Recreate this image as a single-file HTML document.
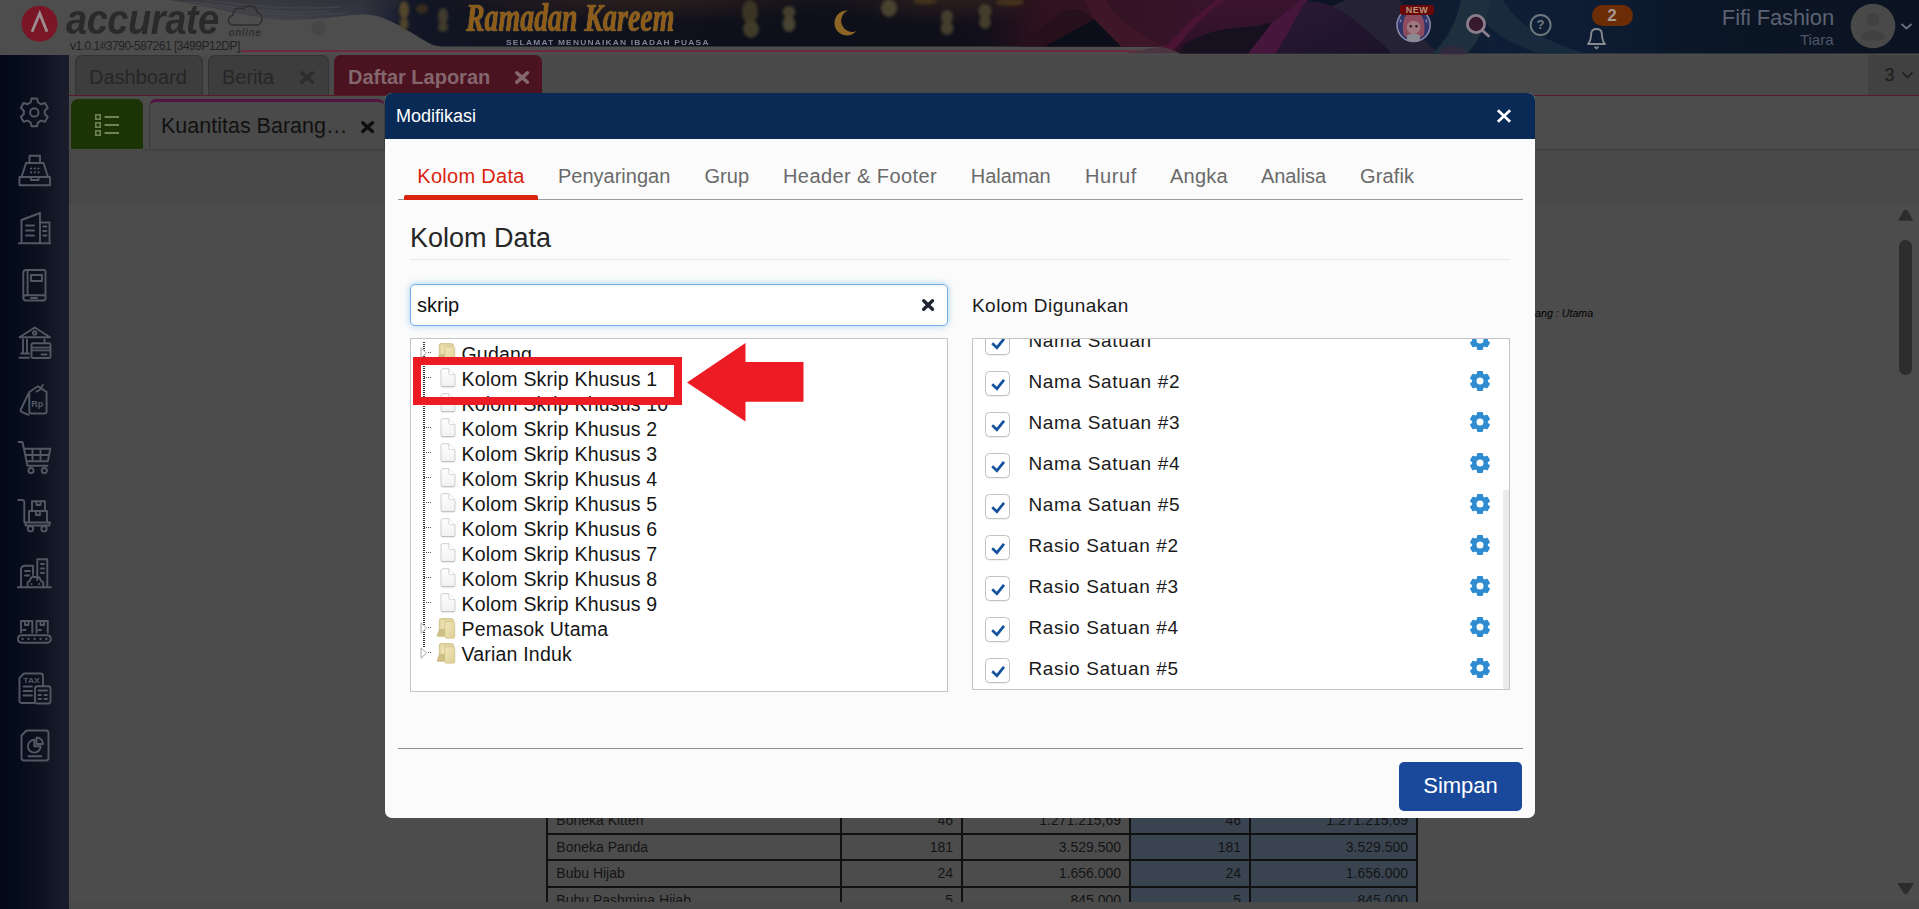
<!DOCTYPE html>
<html lang="id">
<head>
<meta charset="utf-8">
<title>Accurate Online - Modifikasi</title>
<style>
*{box-sizing:border-box;margin:0;padding:0}
html,body{width:1919px;height:909px;overflow:hidden}
body{background:#4c4c4c;font-family:"Liberation Sans",sans-serif;position:relative;color:#222}
.abs{position:absolute}
/* ---------- header ---------- */
#hdr{position:absolute;left:0;top:0;width:1919px;height:55px;overflow:hidden;background:#4e4e4e}
#hdr svg{position:absolute;left:0;top:0}
.logo-text{position:absolute;left:66px;top:-4px;font:italic bold 42px/48px "Liberation Sans",sans-serif;color:#2a2a2a;letter-spacing:-0.5px;transform:scaleX(.905);transform-origin:left}
.logo-online{position:absolute;left:228.500px;top:27px;font:italic bold 10px/11px "Liberation Sans",sans-serif;color:#303030;letter-spacing:.55px}
.ver{position:absolute;left:70px;top:39.500px;font:12px/13px "Liberation Sans",sans-serif;color:#222;letter-spacing:-0.5px}
.rk{position:absolute;left:466px;top:-7px;font:italic bold 41px/48px "Liberation Serif",serif;color:#8d5c18;letter-spacing:0;white-space:nowrap;transform:scaleX(.68);transform-origin:left;text-shadow:0 0 1.5px #8a7648,0 0 1px #8a7648}
.rk2{position:absolute;left:506px;top:37.500px;font:bold 7px/9px "Liberation Sans",sans-serif;color:#7f8494;letter-spacing:1px;white-space:nowrap;transform:scaleX(1.2);transform-origin:left}
.uname{position:absolute;right:85px;top:5px;font:22px/25px "Liberation Sans",sans-serif;color:#5c6272;white-space:nowrap;letter-spacing:-0.13px}
.urole{position:absolute;right:85.500px;top:30.500px;font:15px/18px "Liberation Sans",sans-serif;color:#50566a;white-space:nowrap}
.qm{position:absolute;left:1535px;top:16px;width:11px;font:bold 13px/17px "Liberation Sans",sans-serif;color:#737d82;text-align:center}
.badge{position:absolute;left:1591.500px;top:5px;width:41px;height:21px;border-radius:11px;background:#6c2c05;color:#a69791;font:bold 17px/21.500px "Liberation Sans",sans-serif;text-align:center}
.new{position:absolute;left:1400px;top:5.300px;width:34px;height:10px;border-radius:3px;background:#6a0808;color:#b89880;font:bold 9px/10.500px "Liberation Sans",sans-serif;text-align:center;letter-spacing:.5px}
/* ---------- sidebar ---------- */
#side{position:absolute;left:0;top:55px;width:69px;height:854px;background:linear-gradient(90deg,#030916 0%,#050c1b 25%,#0c111f 55%,#151827 80%,#1b1d2b 100%)}
#side svg{position:absolute;fill:none;stroke:#535762;stroke-width:1.9;stroke-linecap:round;stroke-linejoin:round}
/* ---------- top tabs ---------- */
.tab{position:absolute;top:55px;height:40px;border:1px solid #333;border-bottom:none;border-radius:7px 7px 0 0;background:#3d3d3d;color:#262626;font:20px/42px "Liberation Sans",sans-serif;white-space:nowrap}
.tab span{position:absolute;top:0}
.tab .x{font:bold 20px/42px "Liberation Sans",sans-serif}
#t3{background:#4b1220;border-color:#4b1220;color:#83676d;font-weight:bold}
#tabline{position:absolute;left:69px;top:95px;width:1850px;height:1.200px;background:#5c1a26}
#cnt{position:absolute;left:1868px;top:55px;width:51px;height:40px;background:#414141;color:#1c1c1c;font:18px/40px "Liberation Sans",sans-serif}
#strip{position:absolute;left:69px;top:55px;width:1850px;height:40px;background:#494949}
#tool{position:absolute;left:69px;top:150px;width:1850px;height:54px;background:#484848}
/* ---------- second row ---------- */
#green{position:absolute;left:71px;top:99px;width:72px;height:50px;background:#1c3306;border-radius:7px 7px 0 0}
#kt{position:absolute;left:149px;top:99px;width:236px;height:50px;border:1px solid #3c3c3c;border-top:3px solid #541443;border-bottom:none;border-radius:7px 7px 0 0;background:#4a4a4a;color:#111;font:21.500px/48px "Liberation Sans",sans-serif}
#row2line{position:absolute;left:143px;top:149px;width:1776px;height:1px;background:#3d3d3d}
/* ---------- modal ---------- */
#modal{position:absolute;left:385px;top:93px;width:1150px;height:725px;background:#fbfbfb;border-radius:7px;overflow:hidden}
#mhead{position:absolute;left:0;top:0;width:1150px;height:45.500px;background:#0a2a56;color:#fff;font:18px/46px "Liberation Sans",sans-serif}
.mt{position:absolute;top:69px;letter-spacing:.12px;font:20px/28px "Liberation Sans",sans-serif;color:#6a6a6a;white-space:nowrap}
.mt.on{color:#d9230f}

/* ---------- report bg ---------- */
.gud{position:absolute;left:1535px;top:307px;font:italic 10.700px/13px "Liberation Sans",sans-serif;color:#020202;white-space:nowrap}
#tblwrap{position:absolute;left:546px;top:806px;width:872px;height:95.500px;overflow:hidden}
#tbl{border-collapse:collapse;table-layout:fixed;width:871px;font:14px/16px "Liberation Sans",sans-serif;color:#141414}
#tbl td{border:2px solid #111;height:26.500px;padding:0 8px 0 8.300px;white-space:nowrap;background:#4c4c4d;vertical-align:middle}
#tbl td.bl{background:#3a4450}
#tbl .c1{width:294px;text-align:left}
#tbl .c2{width:121px;text-align:right}
#tbl .c3{width:168px;text-align:right}
#tbl .c4{width:120px;text-align:right}
#tbl .c5{width:167px;text-align:right}
#sb-th{position:absolute;left:1898.800px;top:239.500px;width:13.200px;height:135px;border-radius:6.600px;background:#2d2d2d}
#botbar{position:absolute;left:69px;top:901.500px;width:1850px;height:8px;background:#4a4a4a}

#mtline{position:absolute;left:13px;top:105.500px;width:1125px;height:1.300px;background:#9a9a9a}
#mton{position:absolute;left:19px;top:102px;width:133.500px;height:4.500px;background:#d9230f;border-radius:2px 2px 0 0}
#h3{position:absolute;left:25px;top:125.800px;font:27px/38px "Liberation Sans",sans-serif;color:#262626;white-space:nowrap}
#hr1{position:absolute;left:25px;top:166px;width:1100px;height:1px;background:#e9e9e9}
#inp{position:absolute;left:25px;top:191px;width:538px;height:42px;border:1.500px solid #6fb0e6;border-radius:5px;background:#fff;box-shadow:0 0 7px rgba(102,175,233,.55), inset 0 1px 1px rgba(0,0,0,.06)}
#inptxt{position:absolute;left:6px;top:.6px;font:20px/39px "Liberation Sans",sans-serif;color:#111}
#inpx{position:absolute;left:510px;top:0;font:bold 15px/40px "Liberation Sans",sans-serif;color:#111}
#tree{position:absolute;left:25px;top:245px;width:538px;height:354px;border:1px solid #c4c4c4;background:#fff;overflow:hidden}
#vdots{position:absolute;left:12px;top:3px;width:1.500px;height:306px;background:repeating-linear-gradient(180deg,#333 0 1px,transparent 1px 2px)}
.ti{position:absolute;left:0;height:25px;width:520px;font:19.500px/25px "Liberation Sans",sans-serif;letter-spacing:.2px;color:#151515;white-space:nowrap}
.ti span{position:absolute;left:50.500px;top:0}
.ti .hd{position:absolute;left:13px;top:10px;width:8px;height:1.300px;background:repeating-linear-gradient(90deg,#555 0 1px,transparent 1px 2px)}
.ti .hd.f{left:17px;width:4px}
.ti .tri{position:absolute;left:9px;top:4.500px}
.ti .doc{position:absolute;left:28.500px;top:1px}
.ti .fold{position:absolute;left:25.300px;top:1px}
#redbox{position:absolute;left:28px;top:264px;width:269px;height:48px;border:8px solid #ed1c24}
#arrow{position:absolute;left:302px;top:250px}
#kd{position:absolute;left:587px;top:199.500px;font:19px/26px "Liberation Sans",sans-serif;letter-spacing:.45px;color:#1a1a1a;white-space:nowrap}
#list{position:absolute;left:587px;top:245px;width:538px;height:352px;border:1px solid #c4c4c4;background:#fff;overflow:hidden}
.li{position:absolute;left:0;width:536px;height:41px;font:19px/24px "Liberation Sans",sans-serif;letter-spacing:.65px;color:#1a1a1a;white-space:nowrap}
.li .cb{position:absolute;left:12px;top:0;width:25px;height:25px;border:1px solid #c2c2c2;border-radius:4.500px;background:#fff;box-shadow:0 1px 1px rgba(0,0,0,.06)}
.li .cb svg{position:absolute;left:-.5px;top:-.5px}
.li span{position:absolute;left:55.500px;top:-1.200px}
.li .gr{position:absolute;left:497.300px;top:0}
#lsb{position:absolute;left:530px;top:151px;width:7px;height:200px;background:#ebebeb}
#fline{position:absolute;left:13px;top:654.700px;width:1125px;height:1.300px;background:#8f8f8f}
#btn{position:absolute;left:1014px;top:669px;width:123px;height:49px;border-radius:5px;background:#1a499c;color:#fff;font:22px/47.600px "Liberation Sans",sans-serif;text-align:center}
</style>
</head>
<body>
<svg width="0" height="0" style="position:absolute">
<defs>
<linearGradient id="gdoc" x1="0" x2="0" y1="0" y2="1"><stop offset="0" stop-color="#ffffff"/><stop offset="1" stop-color="#f1f1f1"/></linearGradient>
<linearGradient id="gfold" x1="0" x2="1" y1="0" y2="1"><stop offset="0" stop-color="#f3e9bd"/><stop offset="1" stop-color="#dccd92"/></linearGradient>
<symbol id="sdoc" viewBox="0 0 16 20"><path d="M1 2.500 Q1 .700 2.800 .700 H8.800 L15 6.600 V17 Q15 18.800 13.200 18.800 H2.800 Q1 18.800 1 17Z" fill="url(#gdoc)" stroke="#cdcdcd" stroke-width="1"/><path d="M1.500 18.600 H14.500" stroke="#bfbfbf" stroke-width="1"/><path d="M8.800 .700 V5 Q8.800 6.600 10.400 6.600 H15" fill="#fff" stroke="#d2d2d2" stroke-width=".9"/></symbol>
<symbol id="sfold" viewBox="0 0 20 21"><path d="M3.300 2 Q3.300 .600 4.700 .600 H15.500 Q17.600 .600 17.600 2.700 V17.500 H3.300 Z" fill="#e2d5a0" stroke="#cbbd84" stroke-width=".8"/><path d="M5.300 2.500 H8 V16 H5.300Z" fill="#ece1b2"/><path d="M3.300 11 L.800 17 Q.400 18.800 2 18.800 H9.500 V11Z" fill="#cdbf86"/><path d="M8.800 5 Q8.800 3.800 10 3.800 H17.200 Q18.800 3.800 18.800 5.400 V18.600 Q18.800 20.200 17.200 20.200 H10.400 Q8.800 20.200 8.800 18.600Z" fill="url(#gfold)" stroke="#cfc088" stroke-width=".7"/></symbol>
<symbol id="stri" viewBox="0 0 8 12"><path d="M1 .800 L6.500 6 L1 11.200 Z" fill="#fff" stroke="#a8a8a8" stroke-width="1"/></symbol>
</defs></svg>
<div id="hdr">
<svg width="1919" height="55" viewBox="0 0 1919 55">
<defs>
<linearGradient id="gnav" x1="0" x2="1" y1="0" y2="0">
<stop offset="0" stop-color="#1a1e30"/><stop offset=".03" stop-color="#121624"/><stop offset=".146" stop-color="#0e101c"/><stop offset=".34" stop-color="#0d0f19"/><stop offset=".405" stop-color="#120f1a"/><stop offset=".47" stop-color="#15101d"/><stop offset=".664" stop-color="#101a2e"/><stop offset=".729" stop-color="#0f1e36"/><stop offset=".793" stop-color="#0e1c33"/><stop offset=".858" stop-color="#0b1626"/><stop offset="1" stop-color="#0a1320"/>
</linearGradient>
<linearGradient id="gtop" x1="0" x2="0" y1="0" y2="1"><stop offset="0" stop-color="#4a2a1c" stop-opacity=".75"/><stop offset=".55" stop-color="#2a1a24" stop-opacity=".25"/><stop offset="1" stop-color="#14162a" stop-opacity="0"/></linearGradient>
<linearGradient id="gw1" x1="0" x2="1" y1="0" y2="1"><stop offset="0" stop-color="#5a1428"/><stop offset="1" stop-color="#2a0f22"/></linearGradient>
<linearGradient id="gw2" x1="0" x2="1" y1="0" y2="1"><stop offset="0" stop-color="#4d1738"/><stop offset="1" stop-color="#22142e"/></linearGradient>
<linearGradient id="gw3" x1="0" x2="1" y1="0" y2="1"><stop offset="0" stop-color="#33204a"/><stop offset="1" stop-color="#191a33"/></linearGradient>
<radialGradient id="glan"><stop offset="0" stop-color="#8b7a45"/><stop offset=".6" stop-color="#6a5a30" stop-opacity=".8"/><stop offset="1" stop-color="#4a3a20" stop-opacity="0"/></radialGradient>
<filter id="bl"><feGaussianBlur stdDeviation="1.7"/></filter>
</defs>
<rect width="1919" height="55" fill="#4d4d4d"/>
<!-- navy banner -->
<path d="M375 0 L386 19.300 C400 24.500 417 37 432 44.700 C437 46.300 442 46.500 452 46.500 L1172 46.500 L1180 53.500 L1919 53.500 L1919 0 Z" fill="url(#gnav)"/>
<ellipse cx="640" cy="-4" rx="230" ry="30" fill="url(#gwarm)"/>
<ellipse cx="960" cy="-6" rx="170" ry="34" fill="url(#gwarm)"/>
<!-- light wave band top-left -->
<linearGradient id="gband" gradientUnits="userSpaceOnUse" x1="170" x2="415" y1="0" y2="0"><stop offset="0" stop-color="#4c4c4c"/><stop offset=".4" stop-color="#434449"/><stop offset=".78" stop-color="#343642"/><stop offset=".9" stop-color="#1f2334"/><stop offset="1" stop-color="#121624"/></linearGradient>
<linearGradient id="gbandv" x1="0" x2="0" y1="0" y2="1"><stop offset="0" stop-color="#2c2d34" stop-opacity=".55"/><stop offset="1" stop-color="#2c2d34" stop-opacity="0"/></linearGradient>
<radialGradient id="gwarm"><stop offset="0" stop-color="#32241f" stop-opacity=".95"/><stop offset=".6" stop-color="#281c1c" stop-opacity=".5"/><stop offset="1" stop-color="#1c141a" stop-opacity="0"/></radialGradient>
<path d="M168 0 C210 5 250 19 285 20 C310 20.500 335 16.500 363 14.300 C372 14.300 380 16.500 388 20 C395 22 405 24 415 24 L415 0 Z" fill="url(#gband)"/>
<path d="M168 0 C210 5 250 19 285 20 C310 20.500 335 16.500 363 14.300 C372 14.300 380 16.500 388 20 L400 0 Z" fill="url(#gbandv)"/>
<path d="M185 1 C240 8 280 15 330 11 M205 0 C250 6 290 10 340 7 M200 4 C250 13 290 18 345 13" stroke="#4a4b52" stroke-width=".7" fill="none"/>
<!-- pink line -->
<rect x="241" y="50.4" width="937" height="1.8" fill="#73203a"/>
<rect x="241" y="52.2" width="937" height="1" fill="#575055"/>
<!-- waves -->
<linearGradient id="gp1" gradientUnits="userSpaceOnUse" x1="985" x2="1200" y1="0" y2="0"><stop offset="0" stop-color="#2c111c" stop-opacity="0"/><stop offset=".28" stop-color="#30121e"/><stop offset="1" stop-color="#38142a"/></linearGradient>
<linearGradient id="gp4" x1="0" x2="0" y1="0" y2="1"><stop offset="0" stop-color="#3c1430"/><stop offset="1" stop-color="#2a1026"/></linearGradient>
<linearGradient id="gp5" x1="0" x2="1" y1="0" y2="1"><stop offset="0" stop-color="#2c1836"/><stop offset="1" stop-color="#1a1428"/></linearGradient>
<path d="M985 0 H1240 C1215 14 1195 32 1183 46.500 H985 Z" fill="url(#gp1)"/>
<path d="M1020 46.500 C1040 30 1055 12 1072 9 C1082 9 1088 14 1094 19.300 L1045 46.500 Z" fill="#26101a"/>
<path d="M1094 19.300 L1121 46.500 H1165 C1150 40 1125 25 1112 10 L1107 0 H1085 C1088 8 1090 14 1094 19.300 Z" fill="#3e1626"/>
<path d="M1045 46.500 L1094 19.300 L1121 46.500 Z" fill="#0b0d18"/>
<path d="M1125 53.500 C1140 50 1150 48 1165 46.500 L1172 46.500 L1180 53.500Z" fill="#4a3640"/>
<path d="M1165 46.500 C1178 36 1192 18 1216 0 H1300 C1290 8 1282 16 1272 22 C1262 26 1250 27 1236 28 C1215 30 1198 36 1186 44 L1180 53.500 Z" fill="url(#gp4)"/>
<path d="M1163 47.500 C1178 36 1192 18 1216 0 H1224 C1200 18 1186 36 1174 50 Z" fill="#4b1434"/>
<path d="M1183 46 C1198 36 1215 30 1236 28 C1250 27 1262 26 1272 22 C1266 32 1258 40 1248 53.500 H1180 Z" fill="#16101f"/>
<path d="M1248 53.500 C1258 40 1266 32 1272 22 C1282 16 1290 8 1300 0 H1308 C1300 14 1290 30 1276 53.500 Z" fill="#46163c"/>
<path d="M1276 53.500 C1290 30 1298 14 1304 3 C1312 1 1322 2 1332 6 C1352 16 1372 34 1392 53.500 Z" fill="url(#gp5)"/>
<path d="M1332 6 C1352 16 1372 34 1392 53.500 H1440 C1420 40 1410 20 1400 0 H1345 C1340 2 1336 4 1332 6Z" fill="#262236"/>
<path d="M1308 0 H1345 C1340 2 1336 4 1332 6 C1322 2 1314 1 1308 0Z" fill="#0c1424"/>
<path d="M1472 0 C1480 22 1500 42 1540 53.500 L1588 53.500 C1548 44 1516 24 1503 0 Z" fill="#1a2c3e" opacity=".9"/>
<path d="M1432 53.500 C1448 40 1457 20 1461 0 L1491 0 C1487 22 1479 42 1467 53.500 Z" fill="#1e303e"/>
<ellipse cx="1453" cy="52" rx="13" ry="6" fill="#4a2240" opacity=".45" filter="url(#bl)"/>
<!-- lanterns -->
<g filter="url(#bl)" opacity=".9">
<ellipse cx="404" cy="10" rx="5" ry="9" fill="#5a4c2c"/><ellipse cx="404" cy="24" rx="4.500" ry="6" fill="#54482a"/>
<ellipse cx="443" cy="16" rx="5" ry="8" fill="#46412f"/><ellipse cx="443" cy="27" rx="5" ry="5" fill="#46412f"/>
<ellipse cx="750" cy="12" rx="8" ry="12" fill="#3e3826"/><ellipse cx="751" cy="29" rx="8" ry="9" fill="#45402a"/>
<ellipse cx="789" cy="12" rx="6.500" ry="6" fill="#4a4530"/><ellipse cx="789" cy="24" rx="6.500" ry="8" fill="#4e4834"/>
<ellipse cx="889" cy="8" rx="8" ry="9" fill="#4e4630"/>
<ellipse cx="947" cy="17" rx="6" ry="7" fill="#48422e"/><ellipse cx="947" cy="28" rx="6.500" ry="7" fill="#48422e"/>
<ellipse cx="985" cy="11" rx="6.500" ry="7" fill="#48422e"/><ellipse cx="985" cy="22" rx="6" ry="7" fill="#48422e"/>
<ellipse cx="1010" cy="2" rx="14" ry="4" fill="#46361e"/>
<ellipse cx="925" cy="1" rx="12" ry="3.500" fill="#46361e"/>
<ellipse cx="422" cy="9" rx="6" ry="5" fill="#3a2e1a"/>
</g>
<!-- crescent -->
<path d="M848 10.500 A12.500 12.500 0 1 0 856.500 31 A10.800 10.800 0 1 1 848 10.500 Z" fill="#8c6424"/>
<!-- small gray dot -->
<circle cx="318.500" cy="28" r="7" fill="#464646"/>
<!-- logo -->
<circle cx="39.500" cy="23.700" r="18" fill="#7a1626"/>
<path d="M32 31.800 L39.700 13.500 L47 31.800" stroke="#9c8e90" stroke-width="2.800" fill="none" stroke-linejoin="miter"/>
<!-- cloud -->
<path d="M234 25 C227.500 25 226.500 17 233 15.500 C232.500 9.500 239 6 243.500 9.500 C247 3.500 257 5 257 12.500 C263.500 13 263.500 25 256.500 25 Z" stroke="#2e2e2e" stroke-width="1.500" fill="none"/>
<!-- avatar mascot -->
<g transform="translate(0 -2.700)">
<circle cx="1413.600" cy="27.700" r="16.600" fill="#2f346a" stroke="#8c8cac" stroke-width="1.500"/>
<path d="M1403.500 37 C1401 22 1406 14.500 1413.600 14.500 C1421 14.500 1426.500 22 1424 37 C1421 43 1406.500 43 1403.500 37Z" fill="#8e4c60"/>
<ellipse cx="1413.600" cy="30" rx="6.800" ry="6.500" fill="#a07880"/>
<path d="M1407 38 Q1413.600 34.500 1420 38 L1420 43 Q1413.600 45.500 1407 43Z" fill="#8a8a92"/>
<circle cx="1410.800" cy="29" r="1.200" fill="#2a1a22"/><circle cx="1416.400" cy="29" r="1.200" fill="#2a1a22"/>
<path d="M1399.500 22 l2 1.500 l-2 1.500 M1427.500 22 l-2 1.500 l2 1.500" stroke="#9a9ab8" stroke-width="1" fill="none"/>
</g>
<!-- search -->
<circle cx="1476" cy="24" r="8.600" stroke="#8c7f8e" stroke-width="2.800" fill="#37192d"/>
<path d="M1482.500 30.500 L1488.500 36" stroke="#8c7f8e" stroke-width="2.800" stroke-linecap="round"/>
<!-- help -->
<circle cx="1540.600" cy="25" r="10" stroke="#6f797e" stroke-width="1.900" fill="none"/>
<!-- bell -->
<path d="M1588 44 C1591.300 41 1590.800 36 1591.300 33 C1592 27.600 1601 27.600 1601.700 33 C1602.200 36 1601.700 41 1605 44 Z" stroke="#868a90" stroke-width="1.900" fill="none" stroke-linejoin="round"/>
<path d="M1594.500 46.500 L1596.500 48.500 L1598.500 46.500" stroke="#868a90" stroke-width="1.600" fill="none"/>
<!-- user avatar -->
<circle cx="1873" cy="26" r="22.300" fill="#494949"/>
<circle cx="1873" cy="19.500" r="6.500" fill="#414141"/>
<path d="M1861.500 38 C1861.500 28 1884.500 28 1884.500 38 C1884.500 42 1861.500 42 1861.500 38Z" fill="#414141"/>
<path d="M1901.500 24 L1906.500 28.500 L1911.500 24" stroke="#6a7380" stroke-width="1.700" fill="none"/>
</svg>
<div class="logo-text">accurate</div>
<div class="logo-online">online</div>
<div class="ver">v1.0.1#3790-587261 [3499P12DP]</div>
<div class="rk">Ramadan Kareem</div>
<div class="rk2">SELAMAT MENUNAIKAN IBADAH PUASA</div>
<div class="new">NEW</div>
<div class="qm">?</div>
<div class="badge">2</div>
<div class="uname">Fifi Fashion</div>
<div class="urole">Tiara</div>
</div>
<div id="side">
<svg style="left:0;top:0;width:69px;height:854px" viewBox="0 55 69 854">
<!-- gear -->
<path d="M30.50 102.50 L31.59 98.46 L37.01 98.46 L38.10 102.50 L40.97 104.16 L45.02 103.08 L47.73 107.78 L44.77 110.74 L44.77 114.06 L47.73 117.02 L45.02 121.72 L40.97 120.64 L38.10 122.30 L37.01 126.34 L31.59 126.34 L30.50 122.30 L27.63 120.64 L23.58 121.72 L20.87 117.02 L23.83 114.06 L23.83 110.74 L20.87 107.78 L23.58 103.08 L27.63 104.16 Z" stroke-width="2"/><circle cx="34.300" cy="112.400" r="4.200" stroke-width="2"/>
<!-- register -->
<path d="M29.500 163 V155.800 H40 V163 M26 163 H43.500 L48 177 H21.500 Z M19.500 177 H50 V185.200 H19.500 Z M31 177 V180 H38.500 V177"/>
<path d="M31 168.500 h.1 M34.700 168.500 h.1 M38.400 168.500 h.1 M31 172.300 h.1 M34.700 172.300 h.1 M38.400 172.300 h.1" stroke-width="2.200"/>
<!-- buildings -->
<path d="M21.500 243 V220 L40 213 V243 M40 222.500 H49.500 V243 M18.800 243.300 H50.400 M26 225.500 H34 M26 230.500 H34 M26 235.500 H34 M43.200 226.500 H46.400 M43.200 231 H46.400 M43.200 235.500 H46.400"/>
<!-- book -->
<path d="M26 270 H44 Q45.500 270 45.500 271.500 V299 Q45.500 300.500 44 300.500 H26 Q23.300 300.500 23.300 297.800 V272.700 Q23.300 270 26 270 Z M27.600 270 V295.300 M23.500 297.500 Q23.500 295.300 26 295.300 H45.500 M31 275 H42 V281 H31 Z M31 298 H37"/>
<!-- bank -->
<path d="M19.500 337.200 L34.700 327.500 L50 337.200 Z M23 339.500 V353.500 M27 339.500 V353.500 M21 353.500 H29 M19.500 357.800 H29 M44.500 339.500 V342 M33 343.300 H49 Q50.500 343.300 50.500 344.800 V356.500 Q50.500 358 49 358 H33 Q31.500 358 31.500 356.500 V344.800 Q31.500 343.300 33 343.300 Z M31.500 347.600 H50.500 M31.500 350.400 H50.500 M41.500 354.500 H46.500"/>
<circle cx="34.700" cy="333" r="1.700"/>
<!-- tag -->
<path d="M29.300 392 L38 386.200 L46.600 392 V411.500 Q46.600 413.500 44.600 413.500 H31.300 Q29.300 413.500 29.300 411.500 Z M28.500 393.500 L20.800 409.500 Q20 411.200 21.800 412 L28.500 414.800 M36.500 391.500 Q40 391 41.500 387 L43 385"/>
<!-- cart -->
<path d="M18.500 442 H22.500 L27.500 465.800 H47.500 M24 448.800 H50.300 L47.800 461.300 H26.800 M32.500 448.800 V461.300 M40.500 448.800 V461.300 M25.300 455 H49"/>
<circle cx="31" cy="470.600" r="2.600"/><circle cx="44.300" cy="470.600" r="2.600"/>
<!-- trolley -->
<path d="M18.300 500 H22 Q24.300 500 24.300 502.300 V522.500 H50.300 M29 511 H47 V522.500 H29 Z M32 501.300 H45 V511 H32 Z M36.500 501.300 V505 H40.500 V501.300 M36 511 V515 H40 V511 M25.500 522.500 V525.500 H49.500 V522.500"/>
<circle cx="30.500" cy="528.700" r="2.700"/><circle cx="44" cy="528.700" r="2.700"/>
<!-- city car -->
<path d="M17.800 587.300 H51 M21 587 V570 Q21 565.800 25.300 565.800 H33 V575 M37.300 580 V559.300 H47.300 V587 M25 571 H30 M25 575.500 H29 M41 564 H44 M41 568.500 H44 M41 573 H44 M27.500 587 V583.500 Q27.500 581.500 29.500 581.300 L31 578 Q31.500 577 32.600 577 H38 Q39.200 577 39.700 578 L41.300 581.300 Q43.300 581.500 43.300 583.500 V587 M31.500 584 h.1 M39.300 584 h.1"/>
<!-- conveyor -->
<path d="M21.800 635.200 H47 Q50.800 635.200 50.800 639 Q50.800 642.700 47 642.700 H21.800 Q18 642.700 18 639 Q18 635.200 21.800 635.200 Z M21 632.500 V621 H32.300 V632.500 M25 621 V625 H28.500 V621 M36.500 632.500 V621 H47.800 V632.500 M40.500 621 V625 H44 V621 M23 630 H25.500 M38.500 630 H41"/>
<path d="M22.500 639 h.1 M28.500 639 h.1 M34.500 639 h.1 M40.500 639 h.1 M46.300 639 h.1" stroke-width="2.300"/>
<!-- tax -->
<path d="M34 703 H22 Q19.500 703 19.500 700.500 V678 L24 673.500 H40.500 Q43 673.500 43 676 V685 M23.500 686.500 H32 M23.500 691 H32 M23.500 695.500 H32 M37.500 686.300 H48 Q50.500 686.300 50.500 688.800 V701 Q50.500 703.500 48 703.500 H37.500 Q35 703.500 35 701 V688.800 Q35 686.300 37.500 686.300 Z M38.500 690.500 H47 M38.500 695 H41 M44.500 695 H47 M38.500 699 H41 M44.500 699 H47"/>
<text x="23.300" y="683.300" font-family="Liberation Sans, sans-serif" font-size="7.600" font-weight="bold" fill="#555964" stroke="none" textLength="16.500" lengthAdjust="spacingAndGlyphs">TAX</text>
<text x="31.200" y="407.300" font-family="Liberation Sans, sans-serif" font-size="9" font-weight="bold" fill="#555964" stroke="none">Rp</text>
<!-- report -->
<path d="M26.500 730.500 H46 Q48.500 730.500 48.500 733 V758 Q48.500 760.500 46 760.500 H24 Q21.500 760.500 21.500 758 V735.500 Z M34.300 739.800 A6.400 6.400 0 1 0 40.700 746.200 H34.300 Z M36.500 737.500 A6.400 6.400 0 0 1 43 744 H36.500 Z M28.500 756.300 H41.500"/>
</svg>
</div>
<div id="strip"></div><div id="tool"></div>
<div class="tab" id="t1" style="left:75px;width:128px"><span style="left:13px">Dashboard</span></div>
<div class="tab" id="t2" style="left:208px;width:121px"><span style="left:13px">Berita</span><svg style="position:absolute;left:90.4px;top:13.9px" width="16.2" height="15.0" viewBox="0 0 16.2 15.0"><path d="M2.80 2.80 L13.40 12.20 M13.40 2.80 L2.80 12.20" stroke="#2d2d2d" stroke-width="3.6" stroke-linecap="round"/></svg></div>
<div class="tab" id="t3" style="left:334px;width:208px"><span style="left:13px">Daftar Laporan</span><svg style="position:absolute;left:178.8px;top:13.9px" width="16.2" height="15.0" viewBox="0 0 16.2 15.0"><path d="M2.80 2.80 L13.40 12.20 M13.40 2.80 L2.80 12.20" stroke="#83676d" stroke-width="3.6" stroke-linecap="round"/></svg></div>
<div id="tabline"></div>
<div id="cnt"><span style="position:absolute;left:16.500px;top:0">3</span><svg style="position:absolute;left:32.500px;top:15px" width="13" height="10" viewBox="0 0 13 10"><path d="M1.500 2.500 L6.500 7.500 L11.500 2.500" stroke="#1c1c1c" stroke-width="1.500" fill="none"/></svg></div>
<div id="green"><svg style="position:absolute;left:23px;top:14px" width="28" height="24" viewBox="0 0 28 24"><g fill="none" stroke="#6f8158" stroke-width="1.600"><rect x="1.800" y="1.800" width="4.400" height="4.400"/><rect x="1.800" y="9.800" width="4.400" height="4.400"/><rect x="1.800" y="17.800" width="4.400" height="4.400"/><path d="M10.500 4 H25 M10.500 12 H25 M10.500 20 H25" stroke-width="2.200"/></g></svg></div>
<div id="kt"><span style="position:absolute;left:11px;top:0;white-space:nowrap">Kuantitas Barang&#8230;</span><svg style="position:absolute;left:210.1px;top:17.8px" width="15.2" height="14.2" viewBox="0 0 15.2 14.2"><path d="M2.70 2.70 L12.50 11.50 M12.50 2.70 L2.70 11.50" stroke="#0e0e0e" stroke-width="3.4" stroke-linecap="round"/></svg></div>
<div id="row2line"></div>

<div id="rep">
<div class="gud">ang : Utama</div>
<div id="tblwrap">
<table id="tbl"><tbody>
<tr><td class="c1">Boneka Kitten</td><td class="c2">46</td><td class="c3">1.271.215,69</td><td class="c4 bl">46</td><td class="c5 bl">1.271.215,69</td></tr>
<tr><td class="c1">Boneka Panda</td><td class="c2">181</td><td class="c3">3.529.500</td><td class="c4 bl">181</td><td class="c5 bl">3.529.500</td></tr>
<tr><td class="c1">Bubu Hijab</td><td class="c2">24</td><td class="c3">1.656.000</td><td class="c4 bl">24</td><td class="c5 bl">1.656.000</td></tr>
<tr><td class="c1">Bubu Pashmina Hijab</td><td class="c2">5</td><td class="c3">845.000</td><td class="c4 bl">5</td><td class="c5 bl">845.000</td></tr>
</tbody></table>
</div>
<svg style="position:absolute;left:1896px;top:207px" width="20" height="16" viewBox="0 0 20 16"><path d="M3.200 13 L8.300 4.200 Q9.600 2.800 10.900 4.200 L16 13 Z" fill="#2d2d2d" stroke="#2d2d2d" stroke-width="1.600" stroke-linejoin="round"/></svg><div id="sb-th"></div><svg style="position:absolute;left:1896px;top:880px" width="20" height="17" viewBox="0 0 20 17"><path d="M2.700 3.800 L8.500 12.800 Q9.700 14 10.900 12.800 L16.700 3.800 Z" fill="#2d2d2d" stroke="#2d2d2d" stroke-width="1.600" stroke-linejoin="round"/></svg><div id="botbar"></div>
</div>

<div id="modal">
<div id="mhead"><span style="position:absolute;left:11px;top:-.4px">Modifikasi</span><svg style="position:absolute;left:1111px;top:14.500px" width="16" height="16" viewBox="0 0 16 16"><path d="M1.900 2.200 L14.100 13.700 M14.100 2.200 L1.900 13.700" stroke="#fff" stroke-width="2.700" stroke-linecap="butt"/></svg></div>
<div class="mt on" id="mt0" style="left:32.3px;letter-spacing:.3px">Kolom Data</div>
<div class="mt" id="mt1" style="left:173.0px;letter-spacing:0">Penyaringan</div>
<div class="mt" id="mt2" style="left:319.4px">Grup</div>
<div class="mt" id="mt3" style="left:398.0px;letter-spacing:.42px">Header &amp; Footer</div>
<div class="mt" id="mt4" style="left:585.7px;letter-spacing:0">Halaman</div>
<div class="mt" id="mt5" style="left:700.0px;letter-spacing:.6px">Huruf</div>
<div class="mt" id="mt6" style="left:785.0px;letter-spacing:.25px">Angka</div>
<div class="mt" id="mt7" style="left:876.0px;letter-spacing:-.08px">Analisa</div>
<div class="mt" id="mt8" style="left:975.0px">Grafik</div>
<div id="mtline"></div><div id="mton"></div>
<div id="h3">Kolom Data</div><div id="hr1"></div>
<div id="inp"><span id="inptxt">skrip</span><svg style="position:absolute;left:510.2px;top:12.5px" width="14.2" height="14.0" viewBox="0 0 14.2 14.0"><path d="M2.70 2.70 L11.50 11.30 M11.50 2.70 L2.70 11.30" stroke="#1f2631" stroke-width="3.4" stroke-linecap="round"/></svg></div>
<div id="tree">
<div id="vdots"></div>
<div class="ti" style="top:3px"><i class="hd f"></i><svg class="tri" width="8" height="12"><use href="#stri"/></svg><svg class="fold" width="20" height="21"><use href="#sfold"/></svg><span>Gudang</span></div>
<div class="ti" style="top:28px"><i class="hd"></i><svg class="doc" width="16" height="20"><use href="#sdoc"/></svg><span>Kolom Skrip Khusus 1</span></div>
<div class="ti" style="top:53px"><i class="hd"></i><svg class="doc" width="16" height="20"><use href="#sdoc"/></svg><span>Kolom Skrip Khusus 10</span></div>
<div class="ti" style="top:78px"><i class="hd"></i><svg class="doc" width="16" height="20"><use href="#sdoc"/></svg><span>Kolom Skrip Khusus 2</span></div>
<div class="ti" style="top:103px"><i class="hd"></i><svg class="doc" width="16" height="20"><use href="#sdoc"/></svg><span>Kolom Skrip Khusus 3</span></div>
<div class="ti" style="top:128px"><i class="hd"></i><svg class="doc" width="16" height="20"><use href="#sdoc"/></svg><span>Kolom Skrip Khusus 4</span></div>
<div class="ti" style="top:153px"><i class="hd"></i><svg class="doc" width="16" height="20"><use href="#sdoc"/></svg><span>Kolom Skrip Khusus 5</span></div>
<div class="ti" style="top:178px"><i class="hd"></i><svg class="doc" width="16" height="20"><use href="#sdoc"/></svg><span>Kolom Skrip Khusus 6</span></div>
<div class="ti" style="top:203px"><i class="hd"></i><svg class="doc" width="16" height="20"><use href="#sdoc"/></svg><span>Kolom Skrip Khusus 7</span></div>
<div class="ti" style="top:228px"><i class="hd"></i><svg class="doc" width="16" height="20"><use href="#sdoc"/></svg><span>Kolom Skrip Khusus 8</span></div>
<div class="ti" style="top:253px"><i class="hd"></i><svg class="doc" width="16" height="20"><use href="#sdoc"/></svg><span>Kolom Skrip Khusus 9</span></div>
<div class="ti" style="top:278px"><i class="hd f"></i><svg class="tri" width="8" height="12"><use href="#stri"/></svg><svg class="fold" width="20" height="21"><use href="#sfold"/></svg><span>Pemasok Utama</span></div>
<div class="ti" style="top:303px"><i class="hd f"></i><svg class="tri" width="8" height="12"><use href="#stri"/></svg><svg class="fold" width="20" height="21"><use href="#sfold"/></svg><span>Varian Induk</span></div>
</div>
<div id="redbox"></div>
<svg id="arrow" width="120" height="82" viewBox="0 0 120 82"><path d="M0 39.500 L58.500 0 V19 H116.500 V58.800 H58.500 V78.500 Z" fill="#ed1c24"/></svg>
<div id="kd">Kolom Digunakan</div>
<div id="list">
<div class="li" style="top:-9px"><i class="cb"><svg width="24" height="24" viewBox="0 0 24 24"><path d="M6.200 12.300 L10.900 16.700 L18 7.800" stroke="#15529e" stroke-width="2.700" fill="none"/></svg></i><span>Nama Satuan</span><svg class="gr" width="20" height="20" viewBox="0 0 20 20"><path d="M7.30 3.32 L7.84 0.65 L12.16 0.65 L12.70 3.32 L14.43 4.33 L17.02 3.45 L19.18 7.19 L17.13 9.00 L17.13 11.00 L19.18 12.81 L17.02 16.55 L14.43 15.67 L12.70 16.68 L12.16 19.35 L7.84 19.35 L7.30 16.68 L5.57 15.67 L2.98 16.55 L0.82 12.81 L2.87 11.00 L2.87 9.00 L0.82 7.19 L2.98 3.45 L5.57 4.33 Z" fill="#2f8cd1" stroke="#2f8cd1" stroke-width="1.500" stroke-linejoin="round"/><circle cx="10" cy="10" r="3.500" fill="#fff"/></svg></div>
<div class="li" style="top:32px"><i class="cb"><svg width="24" height="24" viewBox="0 0 24 24"><path d="M6.200 12.300 L10.900 16.700 L18 7.800" stroke="#15529e" stroke-width="2.700" fill="none"/></svg></i><span>Nama Satuan #2</span><svg class="gr" width="20" height="20" viewBox="0 0 20 20"><path d="M7.30 3.32 L7.84 0.65 L12.16 0.65 L12.70 3.32 L14.43 4.33 L17.02 3.45 L19.18 7.19 L17.13 9.00 L17.13 11.00 L19.18 12.81 L17.02 16.55 L14.43 15.67 L12.70 16.68 L12.16 19.35 L7.84 19.35 L7.30 16.68 L5.57 15.67 L2.98 16.55 L0.82 12.81 L2.87 11.00 L2.87 9.00 L0.82 7.19 L2.98 3.45 L5.57 4.33 Z" fill="#2f8cd1" stroke="#2f8cd1" stroke-width="1.500" stroke-linejoin="round"/><circle cx="10" cy="10" r="3.500" fill="#fff"/></svg></div>
<div class="li" style="top:73px"><i class="cb"><svg width="24" height="24" viewBox="0 0 24 24"><path d="M6.200 12.300 L10.900 16.700 L18 7.800" stroke="#15529e" stroke-width="2.700" fill="none"/></svg></i><span>Nama Satuan #3</span><svg class="gr" width="20" height="20" viewBox="0 0 20 20"><path d="M7.30 3.32 L7.84 0.65 L12.16 0.65 L12.70 3.32 L14.43 4.33 L17.02 3.45 L19.18 7.19 L17.13 9.00 L17.13 11.00 L19.18 12.81 L17.02 16.55 L14.43 15.67 L12.70 16.68 L12.16 19.35 L7.84 19.35 L7.30 16.68 L5.57 15.67 L2.98 16.55 L0.82 12.81 L2.87 11.00 L2.87 9.00 L0.82 7.19 L2.98 3.45 L5.57 4.33 Z" fill="#2f8cd1" stroke="#2f8cd1" stroke-width="1.500" stroke-linejoin="round"/><circle cx="10" cy="10" r="3.500" fill="#fff"/></svg></div>
<div class="li" style="top:114px"><i class="cb"><svg width="24" height="24" viewBox="0 0 24 24"><path d="M6.200 12.300 L10.900 16.700 L18 7.800" stroke="#15529e" stroke-width="2.700" fill="none"/></svg></i><span>Nama Satuan #4</span><svg class="gr" width="20" height="20" viewBox="0 0 20 20"><path d="M7.30 3.32 L7.84 0.65 L12.16 0.65 L12.70 3.32 L14.43 4.33 L17.02 3.45 L19.18 7.19 L17.13 9.00 L17.13 11.00 L19.18 12.81 L17.02 16.55 L14.43 15.67 L12.70 16.68 L12.16 19.35 L7.84 19.35 L7.30 16.68 L5.57 15.67 L2.98 16.55 L0.82 12.81 L2.87 11.00 L2.87 9.00 L0.82 7.19 L2.98 3.45 L5.57 4.33 Z" fill="#2f8cd1" stroke="#2f8cd1" stroke-width="1.500" stroke-linejoin="round"/><circle cx="10" cy="10" r="3.500" fill="#fff"/></svg></div>
<div class="li" style="top:155px"><i class="cb"><svg width="24" height="24" viewBox="0 0 24 24"><path d="M6.200 12.300 L10.900 16.700 L18 7.800" stroke="#15529e" stroke-width="2.700" fill="none"/></svg></i><span>Nama Satuan #5</span><svg class="gr" width="20" height="20" viewBox="0 0 20 20"><path d="M7.30 3.32 L7.84 0.65 L12.16 0.65 L12.70 3.32 L14.43 4.33 L17.02 3.45 L19.18 7.19 L17.13 9.00 L17.13 11.00 L19.18 12.81 L17.02 16.55 L14.43 15.67 L12.70 16.68 L12.16 19.35 L7.84 19.35 L7.30 16.68 L5.57 15.67 L2.98 16.55 L0.82 12.81 L2.87 11.00 L2.87 9.00 L0.82 7.19 L2.98 3.45 L5.57 4.33 Z" fill="#2f8cd1" stroke="#2f8cd1" stroke-width="1.500" stroke-linejoin="round"/><circle cx="10" cy="10" r="3.500" fill="#fff"/></svg></div>
<div class="li" style="top:196px"><i class="cb"><svg width="24" height="24" viewBox="0 0 24 24"><path d="M6.200 12.300 L10.900 16.700 L18 7.800" stroke="#15529e" stroke-width="2.700" fill="none"/></svg></i><span>Rasio Satuan #2</span><svg class="gr" width="20" height="20" viewBox="0 0 20 20"><path d="M7.30 3.32 L7.84 0.65 L12.16 0.65 L12.70 3.32 L14.43 4.33 L17.02 3.45 L19.18 7.19 L17.13 9.00 L17.13 11.00 L19.18 12.81 L17.02 16.55 L14.43 15.67 L12.70 16.68 L12.16 19.35 L7.84 19.35 L7.30 16.68 L5.57 15.67 L2.98 16.55 L0.82 12.81 L2.87 11.00 L2.87 9.00 L0.82 7.19 L2.98 3.45 L5.57 4.33 Z" fill="#2f8cd1" stroke="#2f8cd1" stroke-width="1.500" stroke-linejoin="round"/><circle cx="10" cy="10" r="3.500" fill="#fff"/></svg></div>
<div class="li" style="top:237px"><i class="cb"><svg width="24" height="24" viewBox="0 0 24 24"><path d="M6.200 12.300 L10.900 16.700 L18 7.800" stroke="#15529e" stroke-width="2.700" fill="none"/></svg></i><span>Rasio Satuan #3</span><svg class="gr" width="20" height="20" viewBox="0 0 20 20"><path d="M7.30 3.32 L7.84 0.65 L12.16 0.65 L12.70 3.32 L14.43 4.33 L17.02 3.45 L19.18 7.19 L17.13 9.00 L17.13 11.00 L19.18 12.81 L17.02 16.55 L14.43 15.67 L12.70 16.68 L12.16 19.35 L7.84 19.35 L7.30 16.68 L5.57 15.67 L2.98 16.55 L0.82 12.81 L2.87 11.00 L2.87 9.00 L0.82 7.19 L2.98 3.45 L5.57 4.33 Z" fill="#2f8cd1" stroke="#2f8cd1" stroke-width="1.500" stroke-linejoin="round"/><circle cx="10" cy="10" r="3.500" fill="#fff"/></svg></div>
<div class="li" style="top:278px"><i class="cb"><svg width="24" height="24" viewBox="0 0 24 24"><path d="M6.200 12.300 L10.900 16.700 L18 7.800" stroke="#15529e" stroke-width="2.700" fill="none"/></svg></i><span>Rasio Satuan #4</span><svg class="gr" width="20" height="20" viewBox="0 0 20 20"><path d="M7.30 3.32 L7.84 0.65 L12.16 0.65 L12.70 3.32 L14.43 4.33 L17.02 3.45 L19.18 7.19 L17.13 9.00 L17.13 11.00 L19.18 12.81 L17.02 16.55 L14.43 15.67 L12.70 16.68 L12.16 19.35 L7.84 19.35 L7.30 16.68 L5.57 15.67 L2.98 16.55 L0.82 12.81 L2.87 11.00 L2.87 9.00 L0.82 7.19 L2.98 3.45 L5.57 4.33 Z" fill="#2f8cd1" stroke="#2f8cd1" stroke-width="1.500" stroke-linejoin="round"/><circle cx="10" cy="10" r="3.500" fill="#fff"/></svg></div>
<div class="li" style="top:319px"><i class="cb"><svg width="24" height="24" viewBox="0 0 24 24"><path d="M6.200 12.300 L10.900 16.700 L18 7.800" stroke="#15529e" stroke-width="2.700" fill="none"/></svg></i><span>Rasio Satuan #5</span><svg class="gr" width="20" height="20" viewBox="0 0 20 20"><path d="M7.30 3.32 L7.84 0.65 L12.16 0.65 L12.70 3.32 L14.43 4.33 L17.02 3.45 L19.18 7.19 L17.13 9.00 L17.13 11.00 L19.18 12.81 L17.02 16.55 L14.43 15.67 L12.70 16.68 L12.16 19.35 L7.84 19.35 L7.30 16.68 L5.57 15.67 L2.98 16.55 L0.82 12.81 L2.87 11.00 L2.87 9.00 L0.82 7.19 L2.98 3.45 L5.57 4.33 Z" fill="#2f8cd1" stroke="#2f8cd1" stroke-width="1.500" stroke-linejoin="round"/><circle cx="10" cy="10" r="3.500" fill="#fff"/></svg></div>
<div id="lsb"></div>
</div>
<div id="fline"></div>
<div id="btn">Simpan</div>
</div>

</body>
</html>
